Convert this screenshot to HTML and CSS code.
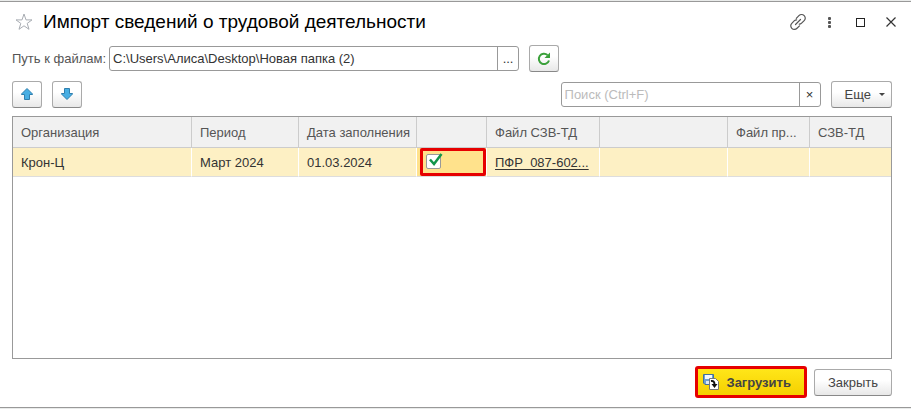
FILE: index.html
```html
<!DOCTYPE html>
<html lang="ru">
  <head>
    <meta charset="UTF-8" />
    <meta name="viewport" content="width=device-width, initial-scale=1.0" />
    <title>Импорт сведений о трудовой деятельности</title>
    <link rel="stylesheet" href="styles.css">
  </head>
  <body>
    <main class="window">
      <!-- Title bar -->
      <header class="titlebar">
        <button type="button" class="icon-btn" aria-label="Добавить в избранное">
          <svg width="18" height="18" viewBox="0 0 18 18" fill="none" stroke="#a9adb3">
            <path d="M9 1L11 6.900H17L12.200 10.400L14 16.300L9 12.800L4 16.300L5.800 10.400L1 6.900H7Z" />
          </svg>
        </button>
        <h1>Импорт сведений о трудовой деятельности</h1>
        <div class="window-buttons">
          <button type="button" class="icon-btn" aria-label="Получить ссылку">
            <svg width="18" height="18" viewBox="0 0 18 18" fill="none" stroke="#555" stroke-width="1.2" stroke-linecap="round">
              <path d="M7.300 5.300L9.900 2.700C11.300 1.300 13.700 1.200 15.200 2.700C16.700 4.200 16.500 6.300 15.200 7.600L12.600 10.200C11.900 10.900 11.200 11.200 10.300 11.200" />
              <path d="M10.500 12.900L8 15.300C6.600 16.700 4.200 16.700 2.800 15.300C1.400 13.900 1.400 11.700 2.800 10.300L5.400 7.700C6 7.100 6.800 6.800 7.600 6.800" />
              <path d="M6.500 11.500L11.500 6.500" />
            </svg>
          </button>
          <button type="button" class="icon-btn" aria-label="Меню">
            <svg width="18" height="18" viewBox="0 0 18 18" fill="#555">
              <rect x="8" y="4" width="3" height="3" rx="1" />
              <rect x="8" y="8" width="3" height="3" rx="1" />
              <rect x="8" y="12" width="3" height="3" rx="1" />
            </svg>
          </button>
          <button type="button" class="icon-btn" aria-label="Развернуть">
            <svg width="18" height="18" viewBox="0 0 18 18" fill="none" stroke="#222">
              <rect x="5.5" y="5.5" width="8" height="8" />
            </svg>
          </button>
          <button type="button" class="icon-btn" aria-label="Закрыть окно">
            <svg width="18" height="18" viewBox="0 0 18 18" stroke="#333" stroke-width="1.2">
              <path d="M4.5 4.5L13.5 13.5M13.5 4.5L4.5 13.5" />
            </svg>
          </button>
        </div>
      </header>

      <!-- Path to files -->
      <div class="path-row">
        <label for="path">Путь к файлам:</label>
        <div class="field path-field">
          <input type="text" id="path" value="C:\Users\Алиса\Desktop\Новая папка (2)" />
          <button type="button" aria-label="Выбрать папку">...</button>
        </div>
        <button type="button" class="btn square" aria-label="Обновить">
          <svg width="16" height="16" viewBox="0 0 16 16" fill="none">
            <path d="M11.500 4A5.200 5.200 0 1 0 13 9.500" stroke="#3aa03a" stroke-width="2" />
            <path d="M14 1.500V7H8.500Z" fill="#3aa03a" />
          </svg>
        </button>
      </div>

      <!-- Toolbar -->
      <div class="toolbar">
        <button type="button" class="btn square" aria-label="Вверх">
          <svg width="14" height="14" viewBox="0 0 14 14" fill="#47aee3" stroke="#2f7fae" stroke-linejoin="round">
            <path d="M7 1.5L12.5 7V7.5H9.5V12.5H4.5V7.5H1.5V7Z" />
          </svg>
        </button>
        <button type="button" class="btn square" aria-label="Вниз">
          <svg width="14" height="14" viewBox="0 0 14 14" fill="#47aee3" stroke="#2f7fae" stroke-linejoin="round">
            <path d="M7 12.5L12.5 7V6.5H9.5V1.5H4.5V6.5H1.5V7Z" />
          </svg>
        </button>
        <div class="field search-field">
          <input type="text" aria-label="Поиск" placeholder="Поиск (Ctrl+F)" />
          <button type="button" aria-label="Очистить">×</button>
        </div>
        <button type="button" class="btn more">Еще <span class="caret"></span></button>
      </div>

      <!-- Files table -->
      <div class="grid">
        <table>
          <colgroup>
            <col class="col-org" />
            <col class="col-period" />
            <col class="col-date" />
            <col class="col-check" />
            <col class="col-file" />
            <col class="col-empty" />
            <col class="col-short" />
            <col />
          </colgroup>
          <thead>
            <tr>
              <th>Организация</th>
              <th>Период</th>
              <th>Дата заполнения</th>
              <th></th>
              <th>Файл СЗВ-ТД</th>
              <th></th>
              <th>Файл пр...</th>
              <th>СЗВ-ТД</th>
            </tr>
          </thead>
          <tbody>
            <tr>
              <td>Крон-Ц</td>
              <td>Март 2024</td>
              <td>01.03.2024</td>
              <td class="check-cell">
                <label class="check">
                  <input type="checkbox" aria-label="Выбрать файл" checked />
                  <svg width="18" height="18" viewBox="0 0 18 18" fill="none" stroke="#12954a" stroke-width="2.5">
                    <path d="M4 7.500L8 12L15.500 2" />
                  </svg>
                </label>
              </td>
              <td><a href="#">ПФР_087-602...</a></td>
              <td></td>
              <td></td>
              <td></td>
            </tr>
          </tbody>
        </table>
      </div>

      <!-- Form buttons -->
      <footer class="actions">
        <button type="button" class="btn primary">
          <svg width="16" height="16" viewBox="0 0 16 16">
            <path d="M0.5 0.5H10.5V10.5H2L0.5 9Z" fill="#6d9fd0" stroke="#41709f" />
            <rect x="2" y="1" width="7" height="4" fill="#f4f8fc" />
            <rect x="3" y="7" width="5" height="3" fill="#dce8f3" />
            <path d="M6.5 4.5H12.5L15.5 7.5V15.5H6.5Z" fill="#fff" stroke="#777" />
            <path d="M8 7C10.500 6.500 11.500 8 11.500 10.500" fill="none" stroke="#111" stroke-width="2" />
            <path d="M8.500 10H14.500L11.500 14Z" fill="#111" />
          </svg>
          Загрузить
        </button>
        <button type="button" class="btn">Закрыть</button>
      </footer>
    </main>
  </body>
</html>
```
FILE: styles.css
```css
* {
  box-sizing: border-box;
}
body {
  margin: 0;
  background-color: #e9ebea;
  font-family: "Liberation Sans", Arial, sans-serif;
  font-size: 13px;
  color: #333;
}
button,
input {
  font: inherit;
  color: inherit;
}
button {
  padding: 0;
  cursor: pointer;
}

.window {
  display: flex;
  flex-direction: column;
  min-height: calc(100vh - 2px);
  margin: 1px 0;
  padding: 0 19px 9px 12px;
  background-color: #fff;
  border-top: 1px solid #999;
  border-bottom: 1px solid #999;
}

/* Title bar */
.titlebar {
  display: flex;
  align-items: center;
  gap: 10px;
  height: 40px;
  padding-left: 3px;
}
.titlebar h1 {
  flex: 1;
  margin: 0;
  font-size: 19px;
  font-weight: normal;
  color: #000;
}
.window-buttons {
  display: flex;
  gap: 13px;
  margin-right: -8px;
}
.icon-btn {
  display: flex;
  border: none;
  background: none;
}

/* Fields and buttons */
.field {
  display: flex;
  height: 25px;
  border: 1px solid #999;
  border-radius: 3px;
  background-color: #fff;
}
.field input {
  flex: 1;
  min-width: 0;
  padding: 0 3px;
  border: none;
  background: none;
  outline: none;
}
.field input::placeholder {
  color: #bbb;
}
.field button {
  width: 21px;
  border: none;
  border-left: 1px solid #999;
  background: none;
}
.btn {
  display: flex;
  align-items: center;
  justify-content: center;
  height: 27px;
  padding: 0 13px;
  border: 1px solid #aaa;
  border-bottom-color: #888;
  border-radius: 3px;
  background: linear-gradient(#fff 40%, #e8e8e8);
  color: #444;
}
.square {
  width: 30px;
  padding: 0;
}

.path-row,
.toolbar {
  display: flex;
  align-items: center;
  gap: 10px;
}
.path-row {
  height: 33px;
}
.path-row label {
  margin-right: -7px;
  color: #555;
}
.path-field {
  flex: 0 1 410px;
}
.toolbar {
  height: 38px;
}
.search-field {
  flex: 0 1 260px;
  margin-left: auto;
}
.more {
  gap: 8px;
  padding: 0 6px 0 13px;
}
.caret {
  border: 3px solid transparent;
  border-top-color: #444;
  border-bottom: none;
}

/* Table */
.grid {
  flex: 1;
  margin-top: 3px;
  border: 1px solid #999;
}
table {
  width: 100%;
  table-layout: fixed;
  border-collapse: separate;
  border-spacing: 0;
}
.col-org {
  width: 179px;
}
.col-period {
  width: 107px;
}
.col-date {
  width: 118px;
}
.col-check {
  width: 70px;
}
.col-file {
  width: 113px;
}
.col-empty {
  width: 128px;
}
.col-short {
  width: 82px;
}
th,
td {
  padding: 0 0 0 8px;
  text-align: left;
  font-weight: normal;
  white-space: nowrap;
}
th {
  height: 31px;
  border-right: 1px solid #ccc;
  border-bottom: 1px solid #ccc;
  background-color: #f1f1f1;
  color: #555;
}
td {
  height: 29px;
  border-right: 1px solid #fff;
  border-bottom: 1px solid #ddd;
  background-color: #fdf0c4;
}
th:last-child,
td:last-child {
  border-right: none;
}
td a {
  color: inherit;
  text-underline-offset: 2px;
}
.check-cell {
  padding: 0 0 0 3px;
  background-color: #ffe28c;
}
.check {
  display: flex;
  align-items: center;
  position: relative;
  height: 28px;
  padding: 0 0 2px 3px;
  border: 3px solid #e60000;
  border-radius: 2px;
}
.check input {
  appearance: none;
  width: 15px;
  height: 15px;
  margin: 0;
  border: 1px solid #999;
  border-radius: 2px;
  background-color: #fff;
}
.check svg {
  position: absolute;
  left: 3px;
  top: 1px;
}

/* Form buttons */
.actions {
  display: flex;
  justify-content: flex-end;
  align-items: center;
  gap: 7px;
  padding-top: 7px;
}
.primary {
  gap: 7px;
  height: 32px;
  padding: 0 13px 0 5px;
  border: 3px solid #e60000;
  background: linear-gradient(#ffe619, #f5d000);
  font-weight: bold;
}
```
